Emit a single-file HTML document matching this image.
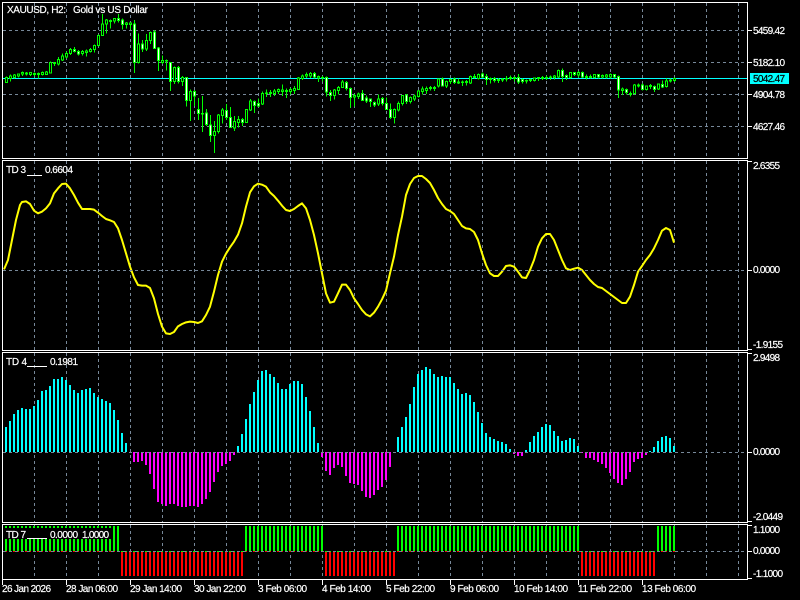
<!DOCTYPE html>
<html><head><meta charset="utf-8"><title>XAUUSD</title>
<style>
html,body{margin:0;padding:0;background:#000;width:800px;height:600px;overflow:hidden}
svg{display:block;position:absolute;left:0;top:0}
text{font-family:"Liberation Sans",sans-serif;font-size:10px;fill:#fff;stroke:#fff;stroke-width:.2}
</style></head><body>
<svg width="800" height="600" viewBox="0 0 800 600" shape-rendering="crispEdges">
<rect width="800" height="600" fill="#000"/>
<!-- vertical grid -->
<g stroke="#778899" stroke-width="1" stroke-dasharray="3 3" fill="none">
<path id="v1" d="M34.5 3V158M66.5 3V158M98.5 3V158M130.5 3V158M162.5 3V158M194.5 3V158M226.5 3V158M258.5 3V158M290.5 3V158M322.5 3V158M354.5 3V158M386.5 3V158M418.5 3V158M450.5 3V158M482.5 3V158M514.5 3V158M546.5 3V158M578.5 3V158M610.5 3V158M642.5 3V158M674.5 3V158M706.5 3V158M738.5 3V158"/>
<path d="M34.5 161V350M66.5 161V350M98.5 161V350M130.5 161V350M162.5 161V350M194.5 161V350M226.5 161V350M258.5 161V350M290.5 161V350M322.5 161V350M354.5 161V350M386.5 161V350M418.5 161V350M450.5 161V350M482.5 161V350M514.5 161V350M546.5 161V350M578.5 161V350M610.5 161V350M642.5 161V350M674.5 161V350M706.5 161V350M738.5 161V350"/>
<path d="M34.5 353V522M66.5 353V522M98.5 353V522M130.5 353V522M162.5 353V522M194.5 353V522M226.5 353V522M258.5 353V522M290.5 353V522M322.5 353V522M354.5 353V522M386.5 353V522M418.5 353V522M450.5 353V522M482.5 353V522M514.5 353V522M546.5 353V522M578.5 353V522M610.5 353V522M642.5 353V522M674.5 353V522M706.5 353V522M738.5 353V522"/>
<path d="M34.5 525V579M66.5 525V579M98.5 525V579M130.5 525V579M162.5 525V579M194.5 525V579M226.5 525V579M258.5 525V579M290.5 525V579M322.5 525V579M354.5 525V579M386.5 525V579M418.5 525V579M450.5 525V579M482.5 525V579M514.5 525V579M546.5 525V579M578.5 525V579M610.5 525V579M642.5 525V579M674.5 525V579M706.5 525V579M738.5 525V579"/>
<path d="M3 30.5H747M3 62.5H747M3 94.5H747M3 126.5H747"/>
</g>
<!-- price line -->
<path d="M3 78.5H747" stroke="#00ffff" stroke-width="1"/>
</svg>

<!-- candles left -->
<svg width="400" height="170" viewBox="0 0 1200 510" shape-rendering="crispEdges" style="left:0;top:0">
<path fill="none" stroke="#00ff00" stroke-width="3" d="M19 230V249M31 224V245M43 222V236M55 220V232M67 214V228M79 216V226M91 216V228M103 217V230M115 217V236M127 214V226M139 213V225M151 184V220M163 186V198M175 171V197M187 160V183M199 155V176M211 144V165M223 141V158M235 150V166M247 150V166M259 148V170M271 144V158M283 133V157M295 104V140M307 42V108M319 57V100M331 58V85M343 54V71M355 42V68M367 56V88M379 66V85M391 66V88M403 60V219M415 100V190M427 120V156M439 102V153M451 94V132M463 90V147M475 141V213M487 167V192M499 178V211M511 187V273M523 200V252M535 198V251M547 228V258M559 231V320M571 268V363M583 270V318M595 294V360M607 288V396M619 327V378M631 345V426M643 363V459M655 342V400M667 324V370M679 312V360M691 321V384M703 348V393M715 348V382M727 354V378M739 327V369M751 297V333M763 302V339M775 295V321M787 275V315M799 269V291M811 270V291M823 267V288M835 265V282M847 253V288M859 266V294M871 264V284M883 258V282M895 231V270M907 224V240M919 218V234M931 216V234M943 216V235M955 226V246M967 228V244M979 229V290M991 270V303M1003 267V299M1015 258V284M1027 240V264M1039 243V271M1051 262V324M1063 282V320M1075 277V297M1087 270V303M1099 287V309M1111 295V321M1123 304V321M1135 284V318M1147 291V316M1159 292V330M1171 310V357M1183 325V370M1195 305V335"/>
<path fill="#000" stroke="#00ff00" stroke-width="3" d="M16 233H22V247H16ZM28 228H34V236H28ZM40 225H46V232H40ZM52 222H58V228H52ZM64 218H70V222H64ZM76 219H82V222H76ZM88 218H94V224H88ZM100 220H106V224H100ZM112 220H118V224H112ZM124 217H130V224H124ZM136 216H142V223H136ZM148 187H154V219H148ZM160 188H166V191H160ZM172 178H178V192H172ZM184 168H190V180H184ZM196 160H202V171H196ZM208 148H214V161H208ZM244 154H250V160H244ZM256 153H262V158H256ZM268 148H274V155H268ZM280 136H286V149H280ZM292 107H298V137H292ZM304 72H310V106H304ZM316 60H322V72H316ZM328 61H334V64H328ZM340 56H346V63H340ZM376 69H382V73H376ZM388 69H394V73H388ZM412 132H418V188H412ZM436 121H442V147H436ZM448 97H454V122H448ZM484 181H490V187H484ZM496 181H502V183H496ZM520 202H526V245H520ZM544 232H550V244H544ZM568 275H574V302H568ZM604 340H610V342H604ZM640 395H646V407H640ZM652 345H658V395H652ZM664 330H670V346H664ZM700 364H706V384H700ZM712 358H718V367H712ZM736 328H742V367H736ZM748 303H754V330H748ZM784 280H790V312H784ZM796 279H802V281H796ZM808 277H814V280H808ZM820 273H826V280H820ZM832 269H838V275H832ZM844 270H850V275H844ZM856 272H862V275H856ZM868 268H874V275H868ZM880 265H886V272H880ZM892 234H898V269H892ZM904 228H910V236H904ZM916 224H922V228H916ZM928 220H934V228H928ZM952 230H958V234H952ZM964 232H970V234H964ZM1000 270H1006V286H1000ZM1012 262H1018V272H1012ZM1024 246H1030V262H1024ZM1060 286H1066V291H1060ZM1072 282H1078V289H1072ZM1132 297H1138V312H1132ZM1180 328H1186V352H1180ZM1192 310H1198V330H1192Z"/>
<path fill="#fff" stroke="#00ff00" stroke-width="3" d="M220 148H226V154H220ZM232 154H238V162H232ZM352 55H358V62H352ZM364 60H370V74H364ZM400 72H406V188H400ZM424 132H430V147H424ZM460 96H466V146H460ZM472 144H478V181H472ZM508 188H514V245H508ZM532 202H538V245H532ZM556 232H562V302H556ZM580 275H586V288H580ZM592 328H598V341H592ZM616 339H622V373H616ZM628 375H634V407H628ZM676 331H682V353H676ZM688 352H694V382H688ZM724 358H730V367H724ZM760 305H766V317H760ZM772 310H778V318H772ZM940 220H946V231H940ZM976 232H982V276H976ZM988 278H994V286H988ZM1036 247H1042V265H1036ZM1048 265H1054V292H1048ZM1084 280H1090V301H1084ZM1096 294H1102V303H1096ZM1108 297H1114V305H1108ZM1120 308H1126V315H1120ZM1144 295H1150V310H1144ZM1156 310H1162V328H1156ZM1168 328H1174V352H1168Z"/>
</svg>
<!-- candles right -->
<svg width="400" height="170" viewBox="0 0 1200 510" shape-rendering="crispEdges" style="left:400px;top:0">
<path fill="none" stroke="#00ff00" stroke-width="3" d="M7 285V317M19 282V312M31 290V310M43 283V303M55 270V293M67 260V283M79 260V282M91 258V272M103 258V273M115 235V263M127 232V258M139 241V264M151 235V252M163 233V252M175 235V252M187 242V258M199 240V256M211 226V252M223 222V236M235 220V238M247 218V234M259 222V255M271 232V251M283 231V247M295 234V249M307 234V246M319 228V244M331 227V240M343 229V244M355 222V252M367 235V250M379 238V250M391 235V246M403 232V244M415 231V243M427 228V240M439 227V240M451 226V240M463 225V238M475 209V234M487 206V246M499 223V240M511 216V236M523 216V228M535 213V232M547 214V234M559 224V238M571 224V236M583 222V236M595 222V236M607 223V235M619 222V235M631 221V236M643 222V236M655 226V294M667 262V285M679 266V283M691 274V290M703 252V283M715 250V263M727 251V271M739 256V271M751 252V267M763 256V276M775 250V270M787 242V264M799 236V262M811 236V247M823 232V246"/>
<path fill="#000" stroke="#00ff00" stroke-width="3" d="M4 287H10V311H4ZM28 293H34V305H28ZM40 288H46V297H40ZM52 273H58V290H52ZM64 267H70V274H64ZM76 265H82V272H76ZM88 263H94V266H88ZM100 263H106V266H100ZM112 237H118V258H112ZM136 244H142V258H136ZM148 238H154V245H148ZM172 246H178V249H172ZM184 246H190V248H184ZM196 245H202V248H196ZM208 229H214V249H208ZM220 229H226V232H220ZM232 223H238V235H232ZM268 236H274V238H268ZM292 238H298V241H292ZM304 237H310V240H304ZM316 235H322V237H316ZM328 232H334V235H328ZM340 233H346V235H340ZM376 241H382V243H376ZM388 238H394V241H388ZM400 234H406V241H400ZM412 233H418V235H412ZM424 232H430V235H424ZM436 232H442V234H436ZM448 231H454V233H448ZM460 228H466V233H460ZM472 211H478V231H472ZM508 218H514V232H508ZM532 218H538V225H532ZM556 229H562V232H556ZM568 229H574V232H568ZM580 224H586V232H580ZM604 226H610V231H604ZM616 225H622V231H616ZM628 224H634V231H628ZM664 267H670V271H664ZM688 280H694V284H688ZM700 255H706V280H700ZM712 255H718V258H712ZM736 258H742V268H736ZM748 256H754V259H748ZM772 252H778V267H772ZM796 243H802V260H796ZM808 240H814V243H808ZM820 236H826V242H820Z"/>
<path fill="#fff" stroke="#00ff00" stroke-width="3" d="M16 285H22V305H16ZM124 237H130V258H124ZM160 237H166V248H160ZM244 222H250V231H244ZM256 229H262V238H256ZM280 235H286V242H280ZM352 232H358V246H352ZM364 239H370V245H364ZM484 211H490V229H484ZM496 226H502V232H496ZM520 218H526V224H520ZM544 218H550V231H544ZM592 224H598V231H592ZM640 224H646V231H640ZM652 229H658V270H652ZM676 268H682V277H676ZM724 255H730V268H724ZM760 259H766V268H760ZM784 254H790V261H784Z"/>
</svg>

<!-- TD 3 line -->
<svg width="400" height="190" viewBox="0 0 1200 570" style="left:0;top:160px">
<polyline fill="none" stroke="#ffff00" stroke-width="6" stroke-linejoin="round" points="12,328 24,300 36,240 48,180 60,135 66,126 78,124 90,132 102,152 114,160 126,155 138,145 150,130 162,100 174,85 186,72 198,71 210,85 222,105 234,128 246,147 258,147 270,147 282,149 294,158 306,168 318,177 330,181 342,186 354,205 366,240 378,280 390,320 402,352 414,375 426,377 438,377 450,384 462,415 474,462 486,500 498,520 510,522 522,516 534,499 546,492 558,487 570,485 582,486 594,489 606,484 618,465 630,440 642,395 654,345 666,305 678,281 690,262 702,245 714,224 726,190 738,140 750,97 762,79 774,71 786,74 798,80 810,97 822,108 834,122 846,137 858,150 870,153 882,147 894,138 906,130 918,145 930,180 942,225 954,280 966,340 978,400 990,428 1002,425 1014,400 1026,374 1038,374 1050,390 1062,415 1074,432 1086,450 1098,463 1110,469 1122,458 1134,440 1146,418 1158,392 1170,340 1182,290 1194,225 1206,170 1218,105"/>
</svg>
<svg width="400" height="190" viewBox="0 0 1200 570" style="left:400px;top:160px">
<polyline fill="none" stroke="#ffff00" stroke-width="6" stroke-linejoin="round" points="-18,290 -6,225 6,170 18,105 30,72 42,54 54,48 66,48 78,57 90,69 102,90 114,114 126,132 138,147 150,153 162,162 174,180 186,198 198,205 210,207 222,216 234,240 246,280 258,315 270,340 282,348 294,348 306,335 318,318 330,316 342,320 354,335 366,352 378,354 390,330 402,300 414,260 426,235 438,222 450,222 462,240 474,270 486,300 498,325 510,330 522,326 534,323 546,330 558,345 570,360 582,372 594,381 606,384 618,393 630,402 642,411 654,420 666,429 678,429 690,410 702,375 714,335 726,318 738,300 750,285 762,265 774,240 786,212 798,204 810,210 822,248"/>
</svg>

<!-- TD 4 histogram -->
<svg width="400" height="170" viewBox="0 0 1200 510" shape-rendering="crispEdges" style="left:0;top:350px">
<path fill="none" stroke="#00ffff" stroke-width="6" d="M18 306V231M30 306V213M42 306V192M54 306V180M66 306V174M78 306V177M90 306V177M102 306V168M114 306V150M126 306V123M138 306V120M150 306V108M162 306V87M174 306V87M186 306V81M198 306V90M210 306V105M222 306V120M234 306V129M246 306V120M258 306V117M270 306V114M282 306V129M294 306V141M306 306V147M318 306V153M330 306V159M342 306V180M354 306V210M366 306V249M378 306V279M714 306V288M726 306V252M738 306V207M750 306V162M762 306V126M774 306V90M786 306V63M798 306V60M810 306V72M822 306V81M834 306V99M846 306V117M858 306V117M870 306V102M882 306V93M894 306V93M906 306V102M918 306V141M930 306V183M942 306V231M954 306V279M1194 306V261"/>
<path fill="none" stroke="#ff00ff" stroke-width="6" d="M402 306V336M414 306V336M426 306V333M438 306V345M450 306V372M462 306V417M474 306V456M486 306V462M498 306V468M510 306V462M522 306V462M534 306V468M546 306V471M558 306V471M570 306V468M582 306V468M594 306V471M606 306V462M618 306V447M630 306V426M642 306V396M654 306V366M666 306V348M678 306V342M690 306V333M702 306V315M966 306V321M978 306V363M990 306V375M1002 306V354M1014 306V345M1026 306V351M1038 306V378M1050 306V399M1062 306V402M1074 306V405M1086 306V423M1098 306V441M1110 306V444M1122 306V435M1134 306V420M1146 306V411M1158 306V390M1170 306V351"/>
</svg>
<svg width="400" height="170" viewBox="0 0 1200 510" shape-rendering="crispEdges" style="left:400px;top:350px">
<path fill="none" stroke="#00ffff" stroke-width="6" d="M6 306V231M18 306V201M30 306V162M42 306V111M54 306V72M66 306V60M78 306V51M90 306V57M102 306V72M114 306V81M126 306V78M138 306V81M150 306V81M162 306V99M174 306V117M186 306V132M198 306V129M210 306V135M222 306V156M234 306V186M246 306V219M258 306V249M270 306V261M282 306V267M294 306V273M306 306V276M318 306V282M330 306V297M378 306V300M390 306V276M402 306V258M414 306V246M426 306V231M438 306V222M450 306V225M462 306V243M474 306V258M486 306V273M498 306V270M510 306V264M522 306V267M534 306V288M750 306V303M762 306V291M774 306V273M786 306V261M798 306V258M810 306V264M822 306V288"/>
<path fill="none" stroke="#ff00ff" stroke-width="6" d="M342 306V312M354 306V318M366 306V318M546 306V309M558 306V324M570 306V324M582 306V330M594 306V336M606 306V342M618 306V354M630 306V369M642 306V387M654 306V399M666 306V405M678 306V387M690 306V366M702 306V336M714 306V327M726 306V324M738 306V315"/>
</svg>

<!-- overlays -->
<svg width="800" height="600" viewBox="0 0 800 600" shape-rendering="crispEdges">
<!-- TD 7 bars -->
<g fill="none" stroke-dasharray="2 2">
<path stroke="#00ff00" stroke-width="25" d="M5 538.5H119M245 538.5H323M397 538.5H579M657 538.5H675"/>
<path stroke="#ff0000" stroke-width="24" d="M121 564H243M325 564H395M581 564H655"/>
<path stroke="#00ff00" stroke-width="1" d="M121 551.5H243M325 551.5H395M581 551.5H655"/>
<path stroke="#ff0000" stroke-width="1" d="M5 551.5H119M245 551.5H323M397 551.5H579M657 551.5H675"/>
</g>
<!-- zero lines -->
<g stroke="#778899" fill="none" stroke-dasharray="3 3">
<path d="M3 270.5H747M3 452.5H747M3 551.5H747"/>
</g>
<!-- frames -->
<g fill="none" stroke="#fff" stroke-width="1">
<path d="M2.5 2.5H747.5V158.5H2.5Z"/>
<path d="M2.5 160.5H747.5V350.5H2.5Z"/>
<path d="M2.5 352.5H747.5V522.5H2.5Z"/>
<path d="M2.5 524.5H747.5V579.5H2.5Z"/>
<!-- price ticks -->
<path d="M748 30.5H752M748 62.5H752M748 94.5H752M748 126.5H752M748 161.5H752M748 270.5H752M748 349.5H752M748 353.5H752M748 452.5H752M748 521.5H752M748 525.5H752M748 551.5H752M748 578.5H752"/>
<!-- time ticks -->
<path d="M2.5 580V585M66.5 580V585M130.5 580V585M194.5 580V585M258.5 580V585M322.5 580V585M386.5 580V585M450.5 580V585M514.5 580V585M578.5 580V585M642.5 580V585"/>
</g>
<!-- TD 7 label bg -->
<rect x="5" y="528" width="107" height="11" fill="#000"/>
<path d="M27 538.5H47" stroke="#fff"/>
<path d="M27 175.5H42" stroke="#fff"/>
<path d="M27 366.5H47" stroke="#fff"/>
<!-- price label bg -->
<rect x="750" y="73" width="39" height="11" fill="#00ffff"/>
</svg>

<svg width="800" height="600" viewBox="0 0 800 600">
<text x="7" y="13" textLength="59" lengthAdjust="spacing">XAUUSD, H2:</text>
<text x="73" y="13" textLength="75" lengthAdjust="spacing">Gold vs US Dollar</text>
<text x="6" y="173" textLength="20" lengthAdjust="spacing">TD 3</text>
<text x="45" y="173" textLength="28" lengthAdjust="spacing">0.6604</text>
<text x="6" y="365" textLength="21" lengthAdjust="spacing">TD 4</text>
<text x="50" y="365" textLength="28" lengthAdjust="spacing">0.1981</text>
<text x="6" y="538" textLength="20" lengthAdjust="spacing">TD 7</text>
<text x="50" y="538" textLength="28" lengthAdjust="spacing">0.0000</text>
<text x="82" y="538" textLength="27" lengthAdjust="spacing">1.0000</text>

<text x="753" y="34" textLength="32" lengthAdjust="spacing">5459.42</text>
<text x="753" y="66" textLength="32" lengthAdjust="spacing">5182.10</text>
<text x="753" y="82" textLength="32" lengthAdjust="spacing" style="fill:#000;stroke:#000">5042.47</text>
<text x="753" y="98" textLength="32" lengthAdjust="spacing">4904.78</text>
<text x="753" y="130" textLength="32" lengthAdjust="spacing">4627.46</text>
<text x="753" y="169" textLength="27" lengthAdjust="spacing">2.6355</text>
<text x="753" y="273" textLength="27" lengthAdjust="spacing">0.0000</text>
<text x="753" y="348" textLength="30" lengthAdjust="spacing">-1.9155</text>
<text x="753" y="361" textLength="27" lengthAdjust="spacing">2.9498</text>
<text x="753" y="455" textLength="27" lengthAdjust="spacing">0.0000</text>
<text x="753" y="520" textLength="30" lengthAdjust="spacing">-2.0449</text>
<text x="753" y="533" textLength="27" lengthAdjust="spacing">1.1000</text>
<text x="753" y="554" textLength="27" lengthAdjust="spacing">0.0000</text>
<text x="753" y="577" textLength="30" lengthAdjust="spacing">-1.1000</text>

<text x="2" y="592" textLength="49" lengthAdjust="spacing">26 Jan 2026</text>
<text x="66" y="592" textLength="52" lengthAdjust="spacing">28 Jan 06:00</text>
<text x="130" y="592" textLength="52" lengthAdjust="spacing">29 Jan 14:00</text>
<text x="194" y="592" textLength="52" lengthAdjust="spacing">30 Jan 22:00</text>
<text x="258" y="592" textLength="49" lengthAdjust="spacing">3 Feb 06:00</text>
<text x="322" y="592" textLength="49" lengthAdjust="spacing">4 Feb 14:00</text>
<text x="386" y="592" textLength="49" lengthAdjust="spacing">5 Feb 22:00</text>
<text x="450" y="592" textLength="49" lengthAdjust="spacing">9 Feb 06:00</text>
<text x="514" y="592" textLength="54" lengthAdjust="spacing">10 Feb 14:00</text>
<text x="578" y="592" textLength="54" lengthAdjust="spacing">11 Feb 22:00</text>
<text x="642" y="592" textLength="54" lengthAdjust="spacing">13 Feb 06:00</text>
</svg>
</body></html>
